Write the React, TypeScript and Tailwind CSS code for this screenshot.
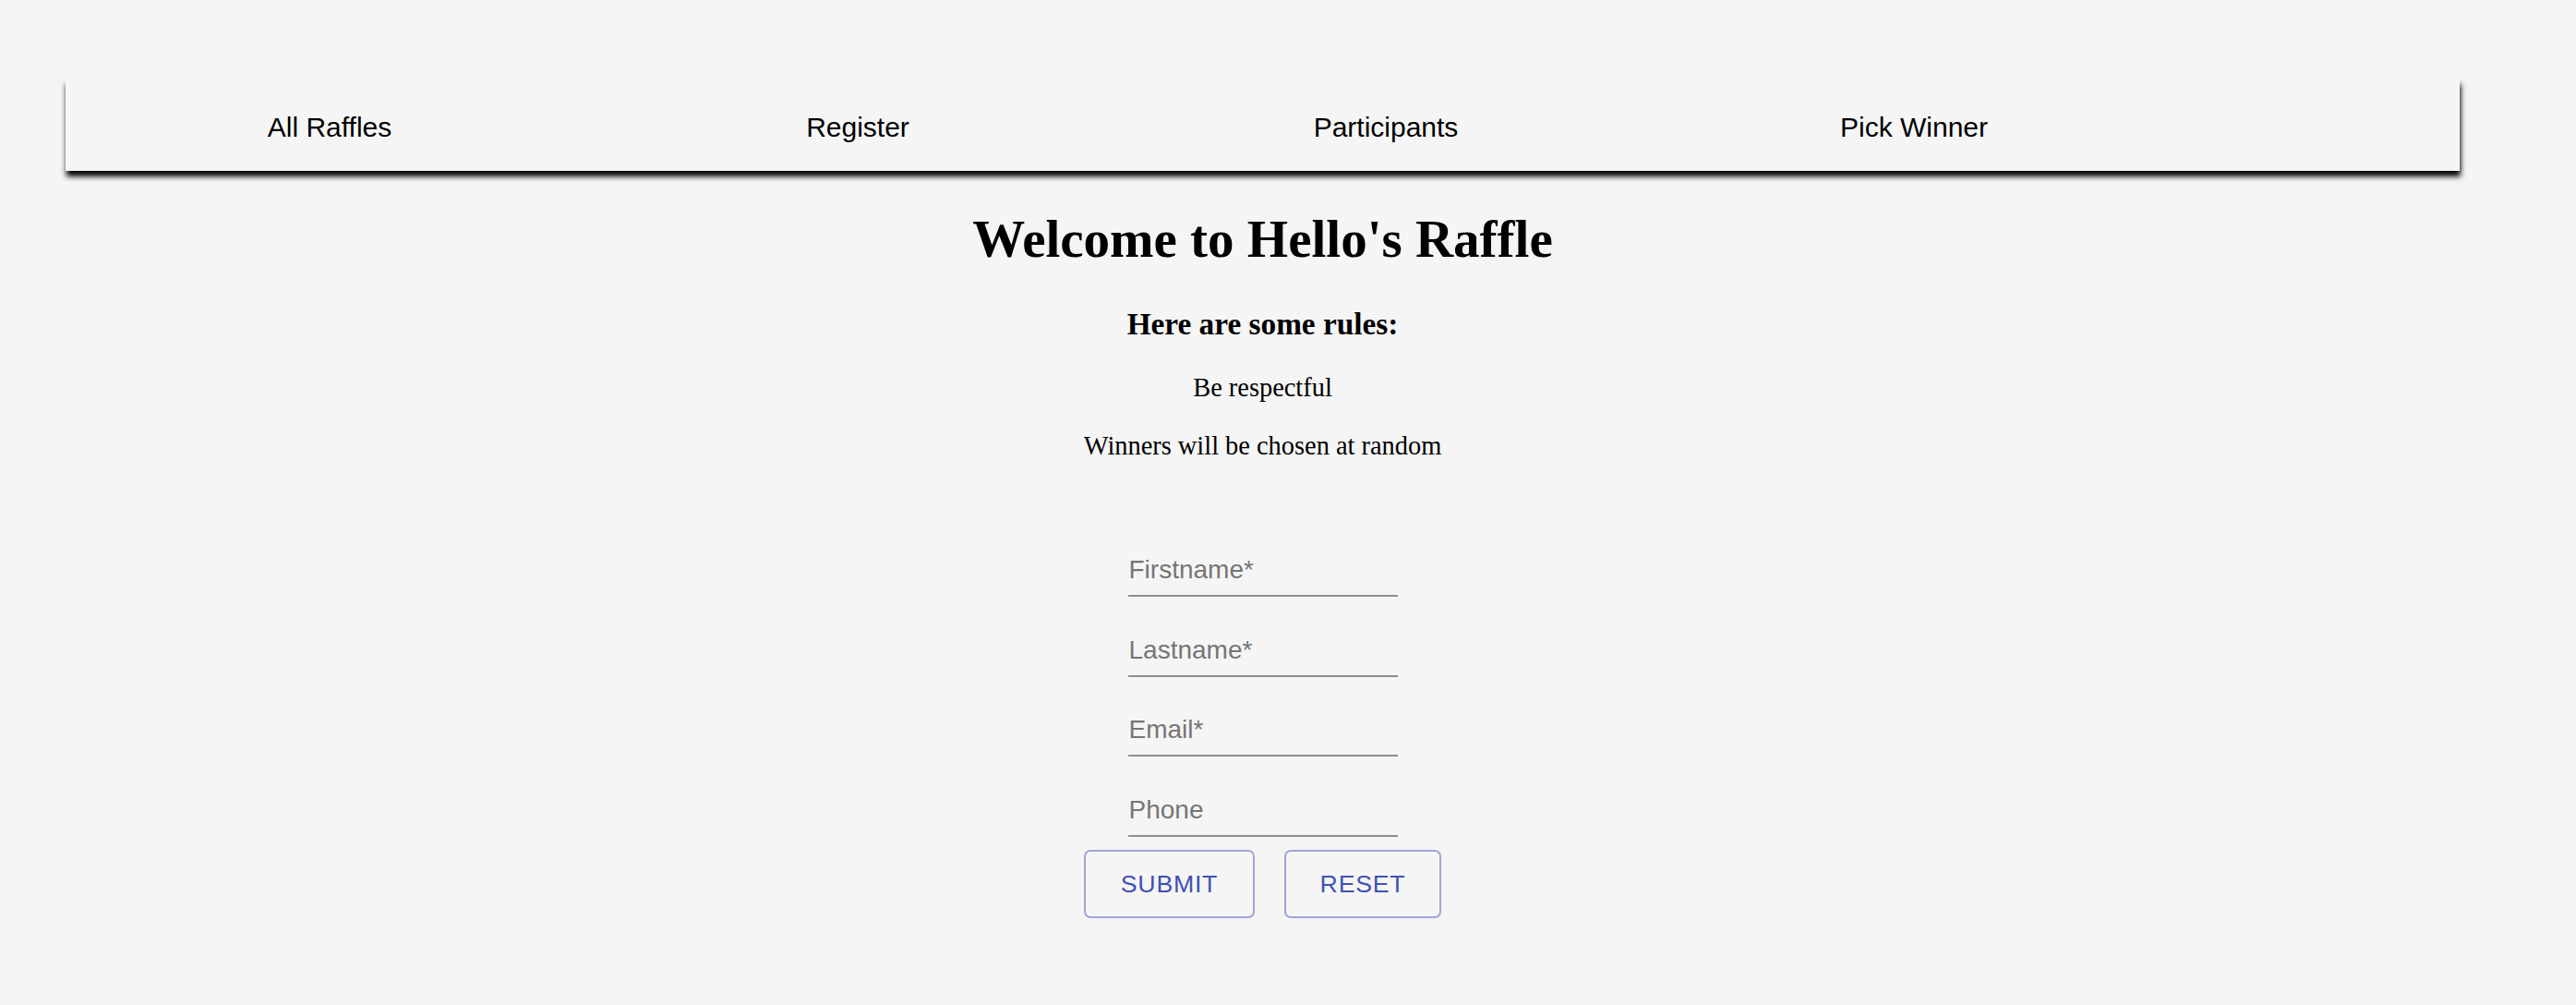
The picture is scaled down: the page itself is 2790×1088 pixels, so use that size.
import { useState } from 'react';

const links = ['All Raffles', 'Register', 'Participants', 'Pick Winner'];

const fields = [
  { name: 'firstname', label: 'Firstname*' },
  { name: 'lastname', label: 'Lastname*' },
  { name: 'email', label: 'Email*' },
  { name: 'phone', label: 'Phone' },
];

export default function App() {
  const [form, setForm] = useState<Record<string, string>>({
    firstname: '',
    lastname: '',
    email: '',
    phone: '',
  });

  const handleReset = () => {
    setForm({ firstname: '', lastname: '', email: '', phone: '' });
  };

  return (
    <div className="min-h-screen bg-[#f5f5f5] pt-[85px] pb-[40px]">
      {/* Top nav */}
      <nav className="ml-[71px] w-[2593px] h-[100px] pt-[5px] bg-[#f5f5f5] shadow-[1px_6px_6px_#000] flex items-center font-['Liberation_Sans',Arial,sans-serif] text-[30px] leading-none text-black">
        {links.map((link) => (
          <a key={link} href="#" className="w-[572px] text-center">
            {link}
          </a>
        ))}
      </nav>

      <main className="ml-[71px] w-[2593px] flex flex-col items-center text-center text-black font-['Liberation_Serif','Times_New_Roman',serif]">
        <h1 className="mt-[45px] text-[57px] font-bold leading-none">Welcome to Hello's Raffle</h1>
        <h3 className="mt-[47px] text-[33.3px] font-bold leading-none">Here are some rules:</h3>
        <p className="mt-[39px] text-[28.4px] leading-none">Be respectful</p>
        <p className="mt-[34px] text-[28.4px] leading-none">Winners will be chosen at random</p>

        {/* Registration form */}
        <form
          className="mt-[93px] flex flex-col items-center font-['Liberation_Sans',Arial,sans-serif]"
          onSubmit={(e) => e.preventDefault()}
        >
          <div className="flex flex-col gap-[30.67px]">
            {fields.map((f) => (
              <input
                key={f.name}
                type="text"
                value={form[f.name]}
                onChange={(e) => setForm({ ...form, [f.name]: e.target.value })}
                placeholder={f.label}
                className="w-[292px] h-[56px] pl-[1px] bg-transparent border-b-2 border-[#8e8e8e] text-[28px] text-black placeholder:text-[#757575] outline-none"
              />
            ))}
          </div>

          <div className="mt-[14px] flex gap-[32px]">
            <button
              type="submit"
              className="w-[185px] h-[74px] flex items-center justify-center rounded-[7px] border-2 border-[#9da6d9] text-[26.7px] tracking-[0.76px] text-[#3f51b5] uppercase"
            >
              Submit
            </button>
            <button
              type="button"
              onClick={handleReset}
              className="w-[170px] h-[74px] flex items-center justify-center rounded-[7px] border-2 border-[#9da6d9] text-[26.7px] tracking-[0.76px] text-[#3f51b5] uppercase"
            >
              Reset
            </button>
          </div>
        </form>
      </main>
    </div>
  );
}
